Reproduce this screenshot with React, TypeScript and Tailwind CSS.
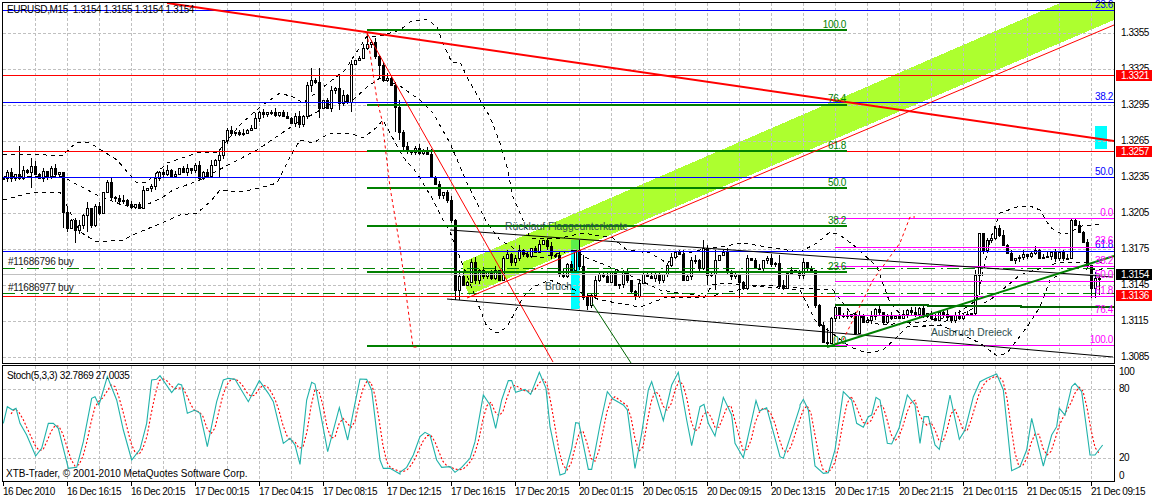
const closes = [
  178,172,178,174,178,170,172,166,174,178,171,176,168,174,172,212,228,220,230,225,215,208,225,206,213,192,182,197,198,201,200,204,207,204,208,190,188,186,178,172,174,170,176,174,168,172,168,170,165,178,172,176,165,160,155,140,130,133,132,134,133,130,128,118,112,114,112,112,115,112,116,118,123,116,124,116,85,80,82,108,100,108,90,88,103,95,102,64,60,58,48,44,42,56,65,80,78,85,107,132,146,150,152,148,153,150,154,177,184,195,192,200,220,290,276,285,282,262,280,270,276,272,278,270,280,258,254,262,258,250,254,256,248,252,244,240,246,255,255,274,276,264,270,250,266,297,305,295,280,274,276,282,272,285,284,272,280,291,296,283,274,276,278,274,280,274,265,257,252,254,280,276,260,260,268,248,275,274,260,255,252,271,276,274,282,288,258,260,268,268,260,258,264,263,285,288,273,270,272,275,262,268,270,305,325,342,343,318,307,315,315,316,314,333,315,322,320,316,309,312,322,316,318,316,318,314,310,312,314,308,316,313,318,320,312,314,316,320,315,318,315,314,313,275,233,250,240,238,228,235,245,253,260,258,257,254,256,253,250,258,257,256,252,258,252,258,258,220,225,232,242,265,288,278,278,
];

// extra long wicks read off the chart: x -> [high, low]
const wicks: Record<number, [number, number]> = {
  19: [146, 180], 31: [158, 188], 63: [176, 228], 67: [206, 232], 75: [218, 243], 87: [202, 232], 111: [178, 200], 219: [150, 178], 311: [68, 92], 319: [68, 118], 339: [76, 110], 351: [60, 112], 367: [33, 50], 379: [55, 78], 395: [82, 132], 399: [100, 140], 455: [219, 300], 459: [270, 300], 579: [240, 270], 583: [255, 300], 587: [294, 310], 635: [290, 300], 703: [240, 270], 707: [245, 285], 715: [250, 290], 739: [275, 298], 779: [255, 288], 815: [270, 308], 827: [328, 346], 975: [270, 316], 979: [233, 295], 1071: [218, 252], 1091: [265, 298], 1095: [272, 298], 1099: [275, 295],
};

const upper = [[3,155],[30,154],[62,156],[77,142],[90,143],[117,160],[137,183],[147,182],[167,163],[200,152],[217,153],[240,125],[260,107],[280,93],[293,97],[303,103],[345,70],[367,36],[377,37],[400,30],[410,22],[427,19],[437,27],[443,43],[452,63],[460,62],[467,77],[480,100],[490,117],[500,143],[507,167],[513,197],[523,220],[530,238],[560,238],[583,233],[613,238],[627,250],[650,253],[667,263],[680,255],[700,250],[743,243],[767,247],[800,252],[817,243],[830,232],[840,235],[857,248],[877,267],[890,303],[913,327],[940,325],[977,300],[990,240],[1000,213],[1017,207],[1030,206],[1040,210],[1050,227],[1063,235],[1070,232],[1082,226],[1102,224]];
const middle = [[3,176],[63,177],[80,186],[97,195],[120,204],[140,208],[163,197],[173,190],[200,180],[213,173],[257,150],[297,123],[333,103],[353,100],[367,87],[380,78],[400,86],[420,100],[433,113],[450,143],[467,183],[487,223],[500,240],[520,252],[540,258],[573,250],[587,258],[613,268],[633,277],[660,290],[707,297],[760,285],[800,288],[833,290],[850,312],[880,325],[920,322],[960,315],[990,300],[1020,275],[1060,262],[1102,262]];
const lower = [[3,200],[30,193],[60,192],[80,232],[97,242],[123,240],[137,233],[157,225],[180,215],[197,213],[210,202],[220,190],[240,192],[260,188],[277,183],[290,157],[300,140],[313,143],[330,133],[350,133],[363,138],[377,127],[383,120],[403,157],[417,173],[433,200],[443,220],[450,232],[487,327],[497,333],[507,327],[523,297],[533,287],[550,280],[575,290],[600,300],[640,307],[667,297],[680,298],[705,297],[712,285],[723,283],[800,290],[815,320],[850,347],[867,353],[883,350],[897,337],[907,327],[940,325],[980,343],[997,356],[1007,353],[1027,327],[1040,307],[1050,280],[1070,268],[1102,270]];

const seg7 = [[10,190],[22,140],[38,150],[48,145],[60,190],[80,225],[107,288],[125,265],[145,190],[160,190],[175,205],[205,325],[230,322],[250,245],[275,115],[285,110],[297,135],[322,50],[350,120],[370,210],[395,300],[420,268],[440,190],[455,60],[470,58],[480,47],[515,98],[535,72],[545,75],[562,160],[585,150],[600,160],[622,260],[650,125],[670,60],[685,55],[705,58],[745,125],[778,62],[805,100],[820,125],[850,250],[870,235],[885,255],[900,313],[920,120],[935,67],[945,72],[983,275],[1018,143],[1043,240],[1065,130],[1080,57],[1100,58],[1115,90],[1140,300],[1150,325],[1170,325],[1200,342]];
const seg8 = [[0,337],[20,322],[40,285],[60,230],[75,217],[90,225],[110,300],[125,322],[150,320],[165,337],[185,322],[210,295],[225,245],[250,105],[270,135],[287,205],[305,120],[325,62],[335,62],[347,97],[375,88],[392,103],[418,37],[438,85],[450,200],[480,345],[495,340],[515,265],[527,188],[537,190],[565,328],[575,328],[600,195],[622,95],[640,118],[670,135],[682,150],[705,325],[725,220],[745,90],[755,65],[790,182],[815,75],[835,37],[860,180],[875,257],[900,140],[912,133],[925,190],[945,228],[970,112],[995,165],[1005,250],[1030,293],[1068,122],[1078,153],[1100,143],[1140,290],[1150,295],[1200,140]];
const seg9 = [[0,135],[10,118],[25,150],[45,318],[70,340],[85,338],[105,270],[130,95],[155,120],[170,190],[190,202],[205,170],[215,165],[228,112],[240,120],[262,250],[275,252],[297,205],[322,105],[345,135],[360,250],[372,170],[385,170],[405,255],[418,268],[450,105],[478,238],[495,210],[520,110],[540,65],[560,55],[590,42],[610,90],[635,332],[660,320],[680,270],[695,175],[730,318],[755,225],[770,200],[778,145],[795,165],[815,80],[825,70],[845,95],[870,285],[885,285],[908,255]];

const stochMain = [
  ...seg7.map(([x, y]) => [x / 3, y / 3 + 360]),
  ...seg8.map(([x, y]) => [x / 3 + 400, y / 3 + 360]),
  ...seg9.map(([x, y]) => [x / 3 + 800, y / 3 + 360]),
];

function valueAt(x: number) {
  for (let i = 1; i < stochMain.length; i++) {
    const [x0, y0] = stochMain[i - 1];
    const [x1, y1] = stochMain[i];
    if (x <= x1) return y0 + ((y1 - y0) * (x - x0)) / Math.max(x1 - x0, 0.01);
  }
  return stochMain[stochMain.length - 1][1];
}

// signal line is the 3 bar average of the main line
const stochSignal: number[][] = [];
for (let x = 11; x <= 1100; x += 4) {
  stochSignal.push([x, (valueAt(x) + valueAt(x - 4) + valueAt(x - 8)) / 3]);
}

const pts = (list: number[][]) => list.map((p) => p.join(",")).join(" ");

const gridX = Array.from({ length: 34 }, (_, i) => 35 + i * 32);
const gridY = [33, 69, 105, 141, 177, 213, 249, 285, 321, 357];

const prices = [
  ["1.3355", 33], ["1.3325", 69], ["1.3295", 105], ["1.3265", 141], ["1.3235", 177],
  ["1.3205", 213], ["1.3175", 249], ["1.3145", 285], ["1.3115", 321], ["1.3085", 357],
] as const;
const boxes = [
  ["1.3321", 75, "bg-[#ff0000] text-white"],
  ["1.3257", 151, "bg-[#ff0000] text-white"],
  ["1.3154", 274, "bg-black text-white"],
  ["1.3136", 295, "bg-[#ff0000] text-white"],
] as const;
const stochLevels = [["100", 372], ["80", 389], ["20", 458], ["0", 476]] as const;

const times = [
  "16 Dec 2010", "16 Dec 16:15", "16 Dec 20:15", "17 Dec 00:15", "17 Dec 04:15", "17 Dec 08:15",
  "17 Dec 12:15", "17 Dec 16:15", "17 Dec 20:15", "20 Dec 01:15", "20 Dec 05:15", "20 Dec 09:15",
  "20 Dec 13:15", "20 Dec 17:15", "20 Dec 21:15", "21 Dec 01:15", "21 Dec 05:15", "21 Dec 09:15",
];

const greenFibo = [
  [30, "100.0", 28], [105, "76.4", 102], [151, "61.8", 149], [188, "50.0", 186], [226, "38.2", 224], [272, "23.6", 270], [346, "0.0", 344],
] as const;
const blueFibo = [["23.6", 8], ["38.2", 100], ["50.0", 175], ["61.8", 248]] as const;
const pinkFibo = [
  [218, "0.0", 216], [247.5, "23.6", 244], [266.5, "38.2", 264], [281.5, "50.0", 278], [296, "61.8", 294], [315.5, "76.4", 313], [345.5, "100.0", 343],
] as const;

function Candles() {
  let prev = closes[0];
  return (
    <g shapeRendering="crispEdges">
      {closes.map((c, i) => {
        const x = 3 + i * 4;
        const open = prev;
        prev = c;
        const top = Math.min(open, c);
        const bot = Math.max(open, c);
        const r1 = ((i * 37) % 11) / 2;
        const r2 = ((i * 53) % 9) / 2;
        const [hi, lo] = wicks[x] ?? [top - r1, bot + r2];
        const down = c > open;
        return (
          <g key={x}>
            <line x1={x + 0.5} x2={x + 0.5} y1={hi} y2={lo} stroke="#000" />
            <rect
              x={x - 0.5}
              y={top}
              width={2}
              height={Math.max(bot - top, 1)}
              fill={down ? "#000" : "#fff"}
              stroke="#000"
              strokeWidth={1}
            />
          </g>
        );
      })}
    </g>
  );
}

function MainChart() {
  return (
    <svg width={1115} height={364} viewBox="0 0 1115 364" className="block shrink-0">
      <polygon points="463,262 1060,3 1114,3 1114,20 469,295 463,280" fill="#adff2f" shapeRendering="crispEdges" />
      <rect x={571} y={240} width={9} height={12} fill="#5cf04a" shapeRendering="crispEdges" />
      <rect x={571} y={252} width={9} height={57} fill="#00ffff" shapeRendering="crispEdges" />
      <rect x={1095} y={126} width={12} height={23} fill="#00ffff" shapeRendering="crispEdges" />

      <g stroke="#c0c0c0" strokeDasharray="3 2" shapeRendering="crispEdges">
        {gridX.map((x) => (
          <line key={x} x1={x + 0.5} x2={x + 0.5} y1={3} y2={363} />
        ))}
        {gridY.map((y) => (
          <line key={y} x1={3} x2={1114} y1={y + 0.5} y2={y + 0.5} />
        ))}
      </g>

      <g fill="none" stroke="#000" strokeDasharray="4 4" shapeRendering="crispEdges">
        <polyline points={pts(upper)} />
        <polyline points={pts(middle)} />
        <polyline points={pts(lower)} />
      </g>

      <Candles />

      {/* horizontal levels */}
      <g shapeRendering="crispEdges">
        <line x1={3} x2={1114} y1={274.5} y2={274.5} stroke="#c0c0c0" />
        {[10, 102.5, 177.5, 251].map((y) => (
          <line key={y} x1={3} x2={1114} y1={Math.floor(y) + 0.5} y2={Math.floor(y) + 0.5} stroke="#0000ff" />
        ))}
        {[75, 151, 296].map((y) => (
          <line key={y} x1={3} x2={1114} y1={y + 0.5} y2={y + 0.5} stroke="#ff0000" />
        ))}
        {[268, 293].map((y) => (
          <line key={y} x1={3} x2={1114} y1={y + 0.5} y2={y + 0.5} stroke="#008000" strokeDasharray="12 6 2 4 12 4" />
        ))}
        {greenFibo.map(([y]) => (
          <rect key={y} x={367} y={y - 1} width={480} height={2} fill="#008000" />
        ))}
        {pinkFibo.map(([y]) => (
          <line key={y} x1={835} x2={1114} y1={Math.floor(y) + 0.5} y2={Math.floor(y) + 0.5} stroke="#ff00ff" />
        ))}
        <polyline points="835,305 928,305 928,306 1021,306 1021,307 1114,307" fill="none" stroke="#006400" strokeWidth={2} />
      </g>

      {/* trend lines */}
      <g fill="none">
        <line x1={447} y1={299} x2={1113} y2={357} stroke="#000" strokeWidth={1} />
        <line x1={450} y1={230} x2={1113} y2={277} stroke="#000" strokeWidth={1} />
        <line x1={592} y1={303} x2={631} y2={363} stroke="#006400" strokeWidth={1} />
        <line x1={367} y1={33} x2={553} y2={362} stroke="#ff0000" strokeWidth={1} />
        <line x1={467} y1={298} x2={1114} y2={25} stroke="#ff0000" strokeWidth={1} />
        <line x1={167} y1={3} x2={1114} y2={141} stroke="#ff0000" strokeWidth={2} />
        <line x1={827} y1={347} x2={1114} y2={256} stroke="#008000" strokeWidth={2} />
        <polyline points="367,33 377,100 382,120 390,187 400,247 413,347 418,347" stroke="#ff0000" strokeDasharray="3 3" />
        <polyline points="843,340 873,280 900,243 910,217 915,217" stroke="#ff0000" strokeDasharray="3 3" />
      </g>

      <g fontSize={10} letterSpacing={-0.1}>
        <text x={7} y={13} fill="#000" letterSpacing={-0.35}>EURUSD,M15{"\u00a0\u00a0"}1.3154 1.3155 1.3154 1.3154</text>
        <text x={8} y={265} fill="#1a1a1a" letterSpacing={-0.2}>#11686796 buy</text>
        <text x={8} y={291} fill="#1a1a1a" letterSpacing={-0.2}>#11686977 buy</text>
        <text x={505} y={230} fontSize={10.3} letterSpacing={0} fill="#2f4f4f">Rücklauf Flaggeunterkante</text>
        <text x={545} y={290} fontSize={10.3} letterSpacing={0} fill="#2f4f4f">Bruch</text>
        <text x={931} y={336} fontSize={10.3} letterSpacing={0} fill="#2f4f4f">Ausbruch Dreieck</text>
        {greenFibo.map(([y, label, ty]) => (
          <text key={y} x={846} y={ty} textAnchor="end" fill="#008000" letterSpacing={-0.35}>{label}</text>
        ))}
        {blueFibo.map(([label, ty]) => (
          <text key={label} x={1113} y={ty} textAnchor="end" fill="#0000ff" letterSpacing={-0.35}>{label}</text>
        ))}
        {pinkFibo.map(([y, label, ty]) => (
          <text key={y} x={1113} y={ty} textAnchor="end" fill="#ff00ff" letterSpacing={-0.35}>{label}</text>
        ))}
      </g>

      {/* frame */}
      <g fill="none" stroke="#000" shapeRendering="crispEdges">
        <rect x={2.5} y={2.5} width={1112} height={361} />
      </g>
    </svg>
  );
}

function StochChart() {
  return (
    <svg width={1115} height={118} viewBox="0 364 1115 118" className="block shrink-0">
      <g stroke="#c0c0c0" strokeDasharray="3 2" shapeRendering="crispEdges">
        {gridX.map((x) => (
          <line key={x} x1={x + 0.5} x2={x + 0.5} y1={366} y2={481} />
        ))}
        <line x1={3} x2={1114} y1={389.5} y2={389.5} />
        <line x1={3} x2={1114} y1={458.5} y2={458.5} />
      </g>
      <polyline points={pts(stochSignal)} fill="none" stroke="#ff0000" strokeWidth={1.1} strokeDasharray="2 2" />
      <polyline points={pts(stochMain)} fill="none" stroke="#20b2aa" strokeWidth={1.1} />
      <g fontSize={10} fill="#000">
        <text x={7} y={379} letterSpacing={-0.35}>Stoch(5,3,3) 32.7869 27.0035</text>
        <text x={6} y={477} letterSpacing={0}>XTB-Trader, © 2001-2010 MetaQuotes Software Corp.</text>
      </g>
      <rect x={2.5} y={365.5} width={1112} height={116} fill="none" stroke="#000" shapeRendering="crispEdges" />
    </svg>
  );
}

export default function App() {
  return (
    <div className="w-[1152px] h-[499px] overflow-hidden bg-white text-black text-[10px] tracking-[-0.45px] font-['Liberation_Sans',Arial,sans-serif]">
      <div className="flex h-[364px]">
        <MainChart />
        <div className="relative flex-1">
          {prices.map(([label, y]) => (
            <span key={label} className="absolute left-[6px] leading-[10px]" style={{ top: y - 5 }}>
              {label}
            </span>
          ))}
          {boxes.map(([label, y, color]) => (
            <span
              key={label}
              className={`absolute left-[1px] w-[36px] h-[11px] pl-[5px] leading-[11px] ${color}`}
              style={{ top: y - 5 }}
            >
              {label}
            </span>
          ))}
        </div>
      </div>
      <div className="flex h-[118px]">
        <StochChart />
        <div className="relative flex-1">
          {stochLevels.map(([label, y]) => (
            <span key={label} className="absolute left-[4px] leading-[10px]" style={{ top: y - 364 - 5 }}>
              {label}
            </span>
          ))}
        </div>
      </div>
      <div className="flex pl-[3px]">
        {times.map((t) => (
          <div key={t} className="w-[64px] shrink-0 whitespace-nowrap">
            <div className="w-px h-[4px] bg-black" />
            <div className="leading-[10px] mt-[1px]">{t}</div>
          </div>
        ))}
      </div>
    </div>
  );
}
